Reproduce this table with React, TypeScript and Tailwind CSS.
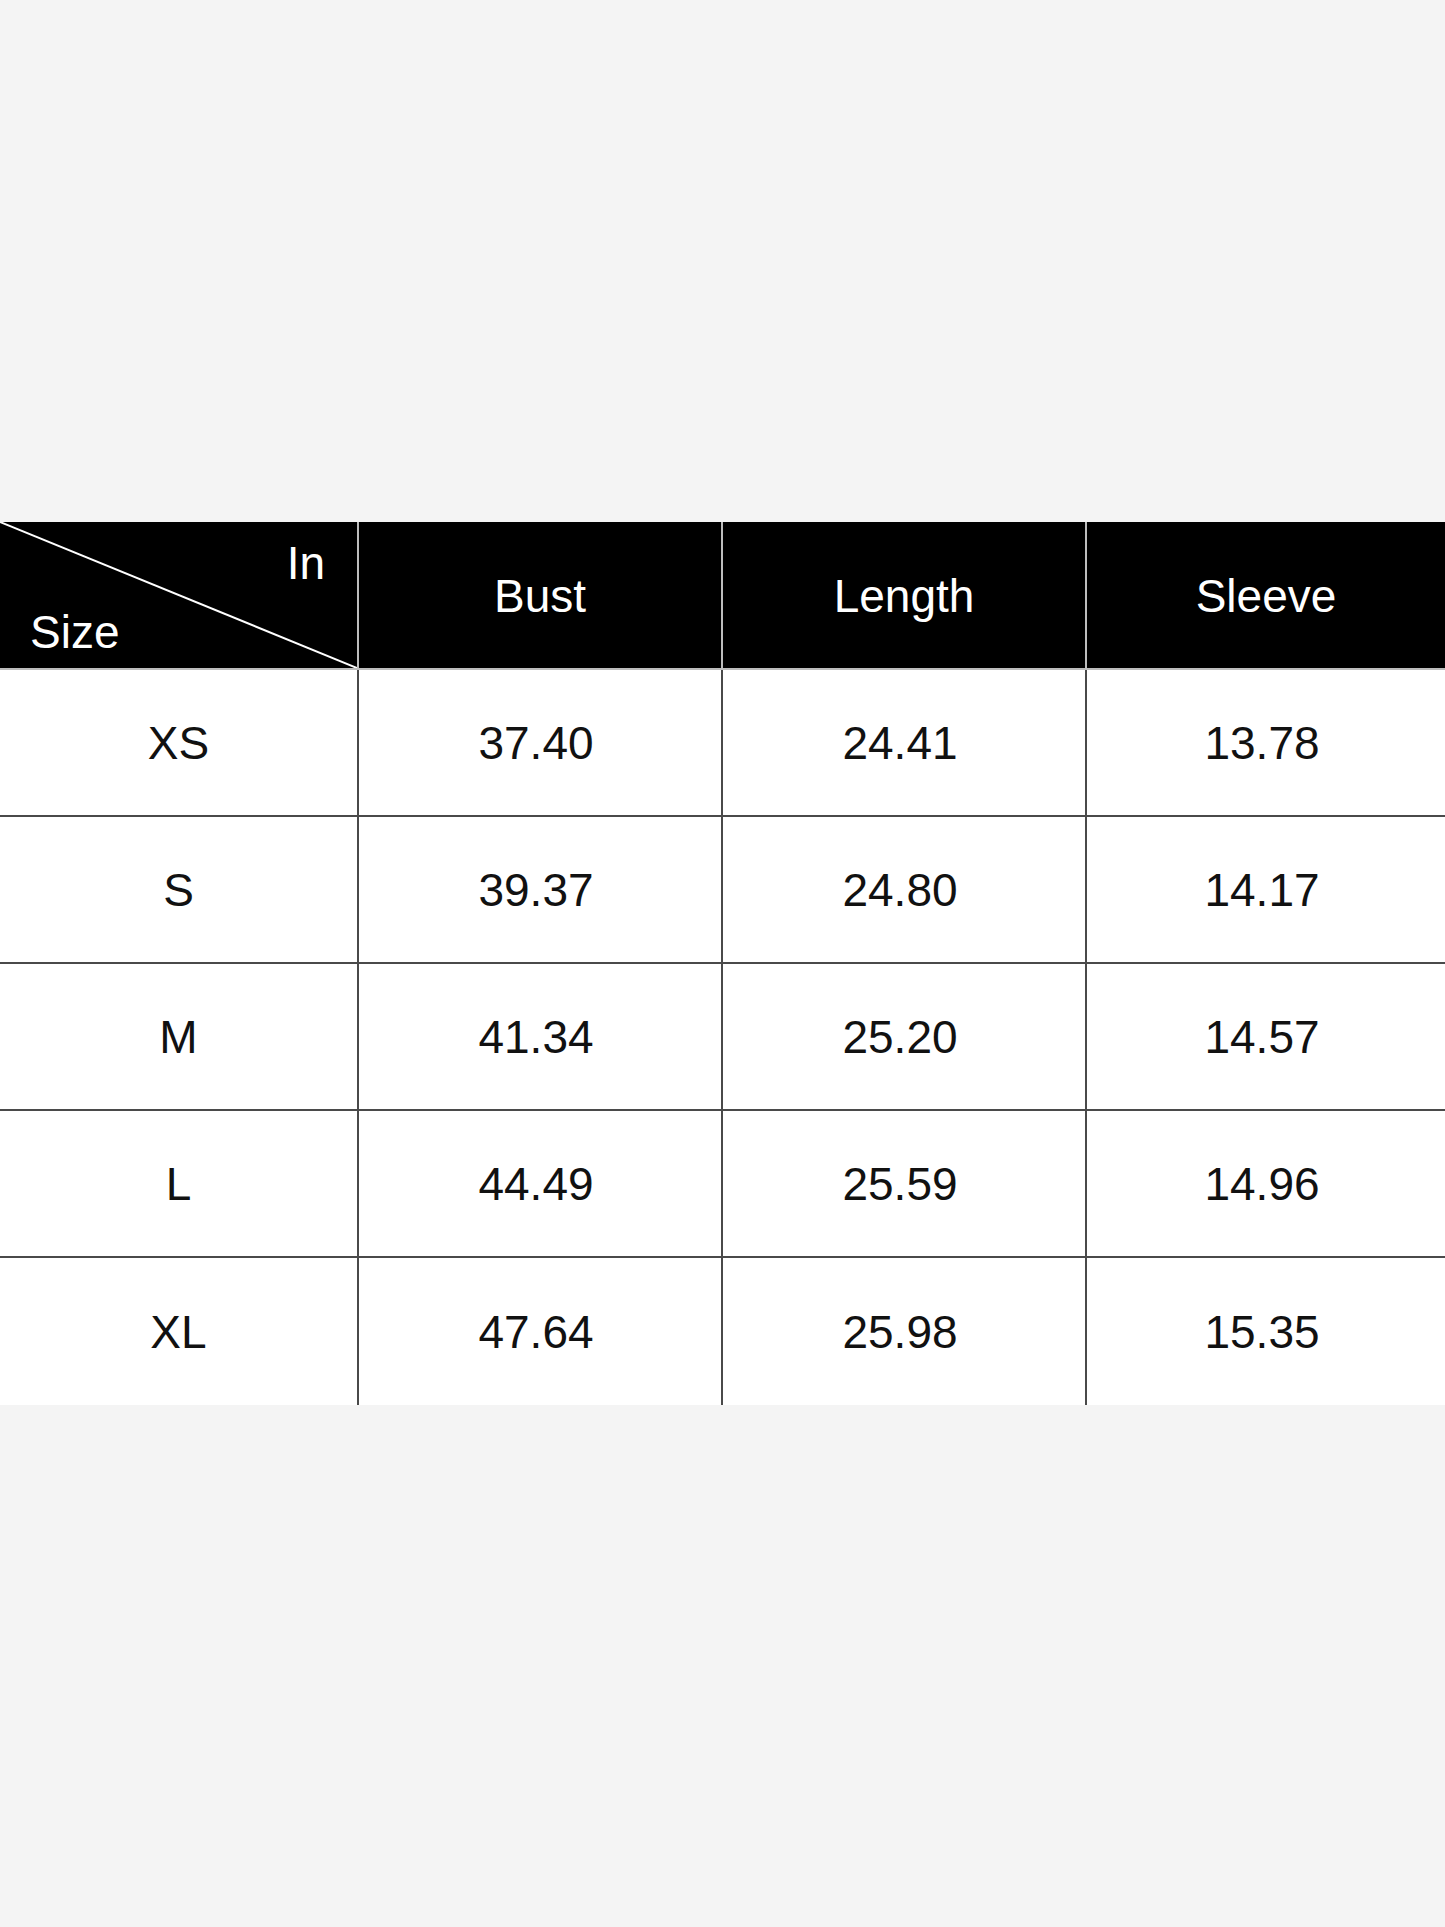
import React from 'react';

const headers = ['Bust', 'Length', 'Sleeve'];

const rows: string[][] = [
    ['XS', '37.40', '24.41', '13.78'],
    ['S', '39.37', '24.80', '14.17'],
    ['M', '41.34', '25.20', '14.57'],
    ['L', '44.49', '25.59', '14.96'],
    ['XL', '47.64', '25.98', '15.35'],
];

const gridCols = 'grid grid-cols-[357px_364px_364px_1fr]';

const App = () => {
    return (
        <div className="min-h-[1927px] w-full bg-[#f4f4f4] pt-[522px] font-['Liberation_Sans',Arial,sans-serif] text-[46px] leading-none">
            {/* header row */}
            <div className={`${gridCols} h-[148px] bg-black text-white border-b-2 border-[#bdbdbd]`}>
                <div className="relative flex flex-col justify-between pt-[18px] pb-[13px]">
                    <svg className="absolute inset-0 h-full w-full" preserveAspectRatio="none" viewBox="0 0 100 100">
                        <line x1="0" y1="0" x2="100" y2="100" stroke="#ffffff" strokeWidth="2" vectorEffect="non-scaling-stroke" />
                    </svg>
                    <span className="self-end pr-[32px]">In</span>
                    <span className="self-start pl-[30px]">Size</span>
                </div>
                {headers.map((h) => (
                    <div key={h} className="flex items-center justify-center border-l-2 border-[#bdbdbd] pt-[2px]">
                        {h}
                    </div>
                ))}
            </div>

            {/* body rows */}
            {rows.map((r, i) => (
                <div
                    key={r[0]}
                    className={`${gridCols} h-[147px] bg-white text-[#111111] ${i < rows.length - 1 ? 'border-b-2 border-[#4a4a4a]' : ''}`}
                >
                    {r.map((v, j) => (
                        <div
                            key={j}
                            className={`flex items-center justify-center ${j > 0 ? 'border-l-2 border-[#4a4a4a] pr-[8px]' : ''}`}
                        >
                            {v}
                        </div>
                    ))}
                </div>
            ))}
        </div>
    );
};

export default App;
